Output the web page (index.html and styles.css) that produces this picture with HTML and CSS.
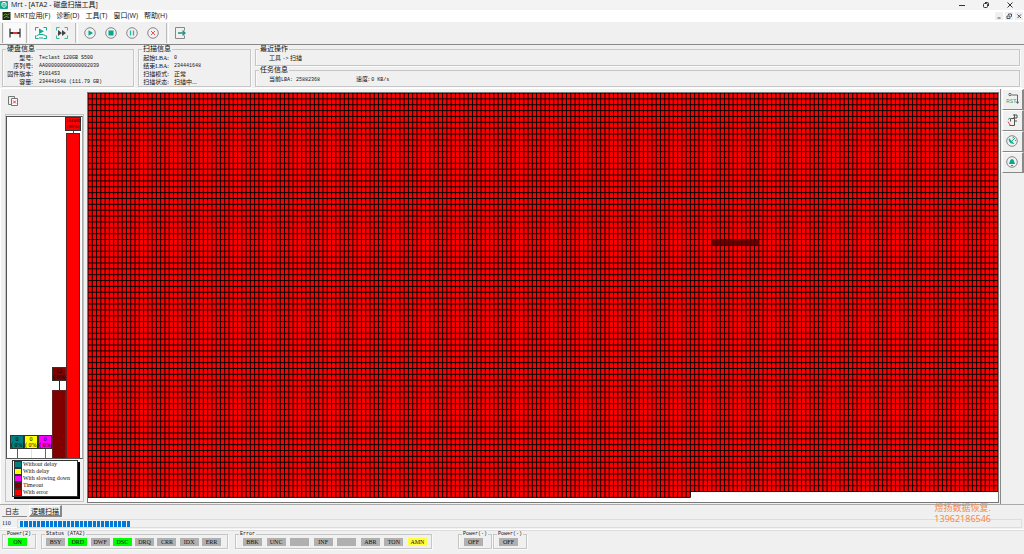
FILE: index.html
```html
<!DOCTYPE html>
<html lang="zh-CN">
<head>
<meta charset="utf-8">
<title>Mrt - [ATA2 - 磁盘扫描工具]</title>
<link rel="stylesheet" href="styles.css">
</head>
<body>
<header class="titlebar">
  <svg class="logo" viewBox="0 0 8 8"><rect width="8" height="8" rx="1" fill="#16a88c"/><path d="M2 2.2 4 1.2 6 2.2V4.6L4 6.6 2 4.6z" fill="none" stroke="#fff"/><path d="M4 2.5v2" stroke="#fff"/></svg>
  <h1 class="title">Mrt - [ATA2 - 磁盘扫描工具]</h1>
  <div class="window-buttons">
    <button aria-label="最小化"><svg viewBox="0 0 8 8"><path d="M1 4.5h6"/></svg></button>
    <button aria-label="还原"><svg viewBox="0 0 8 8"><rect x="1.5" y="2.5" width="4" height="4" rx="1"/><path d="M3 1.5h2.5a1 1 0 0 1 1 1V5"/></svg></button>
    <button aria-label="关闭"><svg viewBox="0 0 8 8"><path d="m1.5 1.5 5 5m0-5-5 5"/></svg></button>
  </div>
</header>
<nav class="menubar">
  <svg class="doc-icon" viewBox="0 0 8 8"><rect width="8" height="8" fill="#1c2a18"/><path d="M1 3.5 3 2l2 1 2-1.500M1.500 6l2-1.500 3 1" stroke="#7c9a3c" fill="none"/></svg>
  <button>MRT应用(F)</button><button>诊断(D)</button><button>工具(T)</button><button>窗口(W)</button><button>帮助(H)</button>
  <div class="child-buttons">
    <button aria-label="最小化子窗口"><svg viewBox="0 0 8 8"><path d="M2.500 6h3"/></svg></button>
    <button aria-label="还原子窗口"><svg viewBox="0 0 8 8"><path d="M2 4h3v2.500H2zM3.500 3V2h3v2.500H6"/></svg></button>
    <button aria-label="关闭子窗口"><svg viewBox="0 0 8 8"><path d="m2.500 2.500 3.500 3.500m0-3.500L2.500 6"/></svg></button>
  </div>
</nav>
<div class="toolbar">
  <div class="tool-group first">
    <button class="tool pressed" aria-label="硬盘"><svg viewBox="0 0 14 14"><path d="M2 2.500v9M12 2.500v9" stroke="#555" stroke-width="1.500"/><path d="M2 7h10" stroke="#333" stroke-width="2"/><path d="M5 7h4.500" stroke="#f03030" stroke-width="2"/></svg></button>
  </div>
  <div class="tool-group">
    <button class="tool lit" aria-label="扫描"><svg viewBox="0 0 14 14" fill="none" stroke="#16ab8d"><path d="M1.500 4.500v-3h3M9.500 1.500h3v3M1.500 9.500v3h3M12.500 9.500v3h-3"/><path d="m5 2.500 5 2.700-5 2.800z" fill="#16ab8d" stroke="none"/><path d="M2.500 10 5 8.500h4l3 1.500M5 12h4"/></svg></button>
    <button class="tool" aria-label="快进"><svg viewBox="0 0 14 14" fill="none" stroke="#36b99f"><path d="M1.500 4.500v-3h3M9.500 1.500h3v3M1.500 9.500v3h3M12.500 9.500v3h-3"/><path d="m3 4 4 3-4 3zM7 4l4 3-4 3z" fill="#444" stroke="none"/></svg></button>
  </div>
  <div class="tool-group">
    <button class="tool" aria-label="开始"><svg viewBox="0 0 14 14"><circle cx="7" cy="7" r="5.300" fill="none" stroke="#888"/><path d="m5.500 4.300 4.500 2.700-4.500 2.700z" fill="#00ab8d"/></svg></button>
    <button class="tool" aria-label="停止"><svg viewBox="0 0 14 14"><circle cx="7" cy="7" r="5.300" fill="none" stroke="#888"/><path d="M4.500 4.500h5v5h-5z" fill="#00ab8d"/></svg></button>
    <button class="tool" aria-label="暂停"><svg viewBox="0 0 14 14"><circle cx="7" cy="7" r="5.300" fill="none" stroke="#888"/><path d="M5.500 4.500v5M8.500 4.500v5" stroke="#2fb79f" stroke-width="1.300"/></svg></button>
    <button class="tool" aria-label="取消"><svg viewBox="0 0 14 14"><circle cx="7" cy="7" r="5.300" fill="none" stroke="#888"/><path d="m5 5 4 4m0-4L5 9" stroke="#f0505a"/></svg></button>
  </div>
  <div class="tool-group">
    <button class="tool" aria-label="退出"><svg viewBox="0 0 14 14" fill="none"><path d="M11.500 4.500v-3h-9v11h9v-3" stroke="#888"/><path d="M5 7h7M9.500 4.500 12 7 9.500 9.500" stroke="#228f80" stroke-width="1.300"/></svg></button>
  </div>
</div>
<section class="info">
  <fieldset class="box disk"><legend>硬盘信息</legend>
    <dl><dt>型号:</dt><dd>Teclast 120GB S500</dd><dt>序列号:</dt><dd>AA000000000000002039</dd><dt>固件版本:</dt><dd>P1014S3</dd><dt>容量:</dt><dd>234441648 (111.79 GB)</dd></dl>
  </fieldset>
  <fieldset class="box scan"><legend>扫描信息</legend>
    <dl><dt>起始LBA:</dt><dd>0</dd><dt>结束LBA:</dt><dd>234441648</dd><dt>扫描模式:</dt><dd class="cjk">正常</dd><dt>扫描状态:</dt><dd class="cjk">扫描中...</dd></dl>
  </fieldset>
  <div class="tasks">
    <fieldset class="box"><legend>最近操作</legend><p><span>工具 <b>-&gt;</b> 扫描</span></p></fieldset>
    <fieldset class="box"><legend>任务信息</legend><p><span>当前<b>LBA: 25882368</b></span><span>速度: <b>0 KB/s</b></span></p></fieldset>
  </div>
</section>
<main class="workspace">
  <aside class="side">
    <button class="clear" aria-label="清除"><svg viewBox="0 0 12 12" fill="none" stroke="#777"><path d="M4 9.500H1.500v-8h6V3"/><path d="M4.500 3.500h6v7h-6z" fill="#fff"/><path d="m6 5.500 3 3m0-3-3 3" stroke="#e03040"/></svg></button>
    <div class="chart-panel">
      <div class="chart">
        <div class="col teal"><span class="tag">0<br>( 0%)</span><i class="stem"></i></div>
        <div class="col yellow"><span class="tag">0<br>( 0%)</span><i class="stem"></i></div>
        <div class="col magenta"><span class="tag">0<br>( 0%)</span><i class="stem"></i></div>
        <div class="col maroon"><span class="tag">12<br>( 0%)</span><i class="stem"></i><i class="bar" style="height:20%"></i></div>
        <div class="col red"><span class="tag">101092<br>(99%)</span><i class="stem"></i><i class="bar" style="height:100%"></i></div>
      </div>
      <ul class="key"><li class="teal">Without delay</li><li class="yellow">With delay</li><li class="magenta">With slowing down</li><li class="maroon">Timeout</li><li class="red">With error</li></ul>
    </div>
  </aside>
  <div class="map-frame"><svg class="map" id="map" viewBox="0 0 910 409" preserveAspectRatio="none"></svg></div>
  <div class="rail">
    <button aria-label="复位"><svg viewBox="0 0 14 14" fill="none" stroke="#666"><circle cx="5" cy="2.500" r="1.200"/><path d="M6.500 3h6v8M11 9.500l1.500 2 1.500-2"/></svg><span>RST</span></button>
    <button aria-label="电源"><svg viewBox="0 0 14 14" fill="none" stroke="#555"><path d="M4.500 12.500h5v-7h-4v3M9.500 5.500v-4M8 2h4v3H8M10 8h2"/><path d="M3 6.500 5 5" stroke="#16ab8d"/><path d="m3 8.500 2 3.500" stroke="#e05050"/></svg></button>
    <button aria-label="连接"><svg viewBox="0 0 14 14" fill="none"><circle cx="7" cy="7" r="5.300" stroke="#888"/><path d="M4 4c-1 3 1 6 5.500 6z" fill="#16ab8d"/><path d="m7 7 3-3M7.500 4 9 3M10 7l1-1" stroke="#16ab8d"/></svg></button>
    <button aria-label="提醒"><svg viewBox="0 0 14 14"><circle cx="7" cy="7" r="5.300" fill="none" stroke="#888"/><path d="M3.800 9c1-1 1-5 3.200-5s2.200 4 3.200 5z" fill="#00ab8d"/><path d="M6 10.500h2" stroke="#00ab8d"/></svg></button>
  </div>
</main>
<div class="tabs" role="tablist"><button role="tab">日志</button><button role="tab" class="active" aria-selected="true">逻辑扫描</button></div>
<div class="progress"><span class="count">110</span><div class="track"><div class="fill" id="fill"></div></div></div>
<footer class="status">
  <fieldset class="box power"><legend>Power(2)</legend><div class="lamps"><span class="on">ON</span></div></fieldset>
  <fieldset class="box ata"><legend>Status (ATA2)</legend><div class="lamps"><span>BSY</span><span class="on">DRD</span><span>DWF</span><span class="on">DSC</span><span>DRQ</span><span>CRR</span><span>IDX</span><span>ERR</span></div></fieldset>
  <fieldset class="box error"><legend>Error</legend><div class="lamps"><span>BBK</span><span>UNC</span><span></span><span>INF</span><span></span><span>ABR</span><span>TON</span><span class="warn">AMN</span></div></fieldset>
  <fieldset class="box power"><legend>Power(-)</legend><div class="lamps"><span>OFF</span></div></fieldset>
  <fieldset class="box power"><legend>Power(-)</legend><div class="lamps"><span>OFF</span></div></fieldset>
</footer>
<div class="contact"><span>煜扬数据恢复.</span><span>13962186546</span></div>
<script src="app.js"></script>
</body>
</html>
```
FILE: styles.css
```css
* { box-sizing: border-box; }
body {
  margin: 0;
  height: 100vh;
  display: flex;
  flex-direction: column;
  position: relative;
  overflow: hidden;
  background: #f0f0f0;
  color: #111;
  font: 6px/8px "Liberation Serif", "Noto Sans CJK SC", serif;
}
button { border: 0; padding: 0; background: none; color: inherit; font: inherit; display: flex; align-items: center; justify-content: center; }
svg { display: block; }
.titlebar, .menubar { flex: none; display: flex; align-items: center; font: 7px/10px "Open Sans", "Noto Sans CJK SC", sans-serif; }
.titlebar { height: 10px; background: #f3f3f3; }
.logo { width: 8px; height: 8px; }
.title { margin: 0 auto 0 3px; font: inherit; }
.window-buttons, .child-buttons { display: flex; fill: none; stroke: #333; }
.window-buttons { gap: 16px; padding-right: 10px; }
.window-buttons svg, .child-buttons svg { width: 8px; height: 8px; }
.menubar { height: 12px; background: #fff; gap: 6px; padding-left: 2px; }
.doc-icon { width: 9px; height: 8px; margin-right: -3px; }
.child-buttons { margin-left: auto; gap: 2px; padding-right: 1px; stroke: #456; }
.child-buttons button { background: #f0f0f0; }

.toolbar { height: 23px; flex: none; display: flex; padding: 1px 2px; border-bottom: 1px solid #888; }
.tool-group { display: flex; align-items: center; padding: 0 3px 0 1px; border-right: 1px solid #bbb; border-left: 1px solid #fff; }
.tool-group.first { padding: 0 1px; border-left-color: #aaa; }
.tool-group + .tool-group { margin-left: 1px; }
.tool-group:last-child { border-right: 0; padding-left: 0; }
.tool { width: 21px; height: 20px; }
.tool svg { width: 14px; height: 14px; }
.pressed { background: #fafafa; }
.lit { background: #f7f7f7; }

.box { margin: 0; padding: 0; min-width: 0; border: 1px solid #c6c6c6; box-shadow: inset 1px 0 #fafafa, 1px 1px #fafafa; }
.box legend { margin-left: 3px; padding: 0 1px; line-height: 7px; }
.info { flex: none; display: flex; gap: 4px; padding: 1px 4px 0 2px; height: 43px; }
.disk { width: 132px; height: 41px; }
.scan { width: 113px; height: 41px; }
.info .box legend { font-size: 7px; }
dl { margin: 0; padding-top: 1px; display: grid; grid-template-columns: 30px 1fr; column-gap: 6px; }
dt { text-align: right; white-space: nowrap; }
.scan dl { column-gap: 5px; }
dd { margin: 0; font-family: "Liberation Mono", monospace; font-size: 5px; white-space: nowrap; }
dd.cjk { font-family: "Noto Sans CJK SC", sans-serif; font-size: 6px; }
b { font-weight: normal; font-family: "Liberation Mono", monospace; font-size: 5px; }
.tasks { flex: 1; display: flex; flex-direction: column; gap: 1px; }
.tasks .box { height: 20px; }
.tasks p { display: flex; margin: 0; padding: 1px 0 0 13px; gap: 36px; }

.workspace { flex: 1; min-height: 0; display: flex; border-top: 1px solid #fff; }
.side { width: 87px; flex: none; display: flex; flex-direction: column; padding: 0 3px 2px 4px; border-left: 1px solid #fff; }
.clear { width: 12px; height: 25px; margin-left: 2px; padding-bottom: 1px; }
.clear svg { width: 12px; height: 12px; }
.chart-panel { flex: 1; min-height: 0; display: flex; flex-direction: column; border: 1px solid #c4c4c4; padding: 1px 0 4px; }
.chart { flex: 1; min-height: 0; display: flex; align-items: flex-end; padding-left: 3px; background: #fff; border: 1px solid #555; border-right-color: #aaa; }
.col { width: 14px; flex: none; height: 100%; display: flex; flex-direction: column; justify-content: flex-end; align-items: center; }
.teal { --tone: #008080; }
.yellow { --tone: #ffff00; }
.magenta { --tone: #ff00ff; }
.maroon { --tone: #800000; }
.red { --tone: #ff0000; }
.tag { width: 100%; height: 14px; flex: none; text-align: center; color: #000; font: 6px/6px "Liberation Serif", serif; white-space: nowrap; background: var(--tone); border: 1px solid #333; }
.red .tag { width: 16px; font-size: 5px; }
.stem { width: 1px; height: 9px; flex: none; background: var(--tone); }
.red .stem { height: 2px; }
.bar { width: 100%; min-height: 0; background: var(--tone); border: 1px solid #622; border-bottom: 0; }
.key { list-style: none; margin: 1px 5px 0 6px; padding: 0 1px; background: #fff; border: 1px solid #333; box-shadow: 2px 2px #000; }
.key li { display: flex; align-items: center; gap: 1px; line-height: 7px; white-space: nowrap; }
.key li::before { content: ""; width: 6px; height: 5px; background: var(--tone); border: 1px solid #333; }
.map-frame { flex: 1; min-width: 0; margin: 3px 1px 1px 0; border: 1px solid #777; background: #fff; }
.map { width: 100%; height: 100%; }
.rail { width: 24px; flex: none; display: flex; flex-direction: column; border-left: 1px solid #888; padding-left: 1px; }
.rail button { height: 21px; padding: 0 1px 1px 0; flex-direction: column; position: relative; border: 1px solid #fff; border-right: 2px solid #888; border-bottom: 1px solid #888; }
.rail svg { width: 14px; height: 14px; }
.rail span { position: absolute; left: 3px; bottom: 5px; font: 6px/6px "Noto Sans", sans-serif; color: #16ab8d; }

.tabs { flex: none; display: flex; gap: 2px; padding-left: 2px; height: 14px; border-top: 1px solid #aaa; }
.tabs button { height: 12px; padding: 0 3px; font: 7px/10px "Noto Sans CJK SC", sans-serif; }
.tabs button:first-child { padding-right: 8px; border-bottom: 1px solid #888; }
.tabs .active { border: 1px solid #fff; border-right: 2px solid #888; border-bottom: 2px solid #888; padding: 0 1px; }
.progress { flex: none; display: flex; height: 12px; padding: 1px 2px; border-bottom: 1px solid #fff; }
.count { width: 15px; line-height: 9px; border-bottom: 1px solid #fff; }
.track { flex: 1; padding: 1px 2px; border: 1px solid #ddd; }
.fill { display: flex; gap: 1px; width: 11%; height: 6px; }
.fill i { flex: 1; background: #0078d7; }
.status { flex: none; display: flex; height: 24px; border-top: 1px solid #ddd; padding: 0 2px 5px; }
.status .box { height: 18px; }
.status legend { font-family: "Liberation Mono", monospace; font-size: 5px; }
.status .power { width: 34px; margin-right: 1px; }
.status .ata { width: 187px; margin: 0 7px 0 4px; }
.status .error { width: 197px; margin-right: 26px; }
.lamps { display: flex; justify-content: space-between; padding: 0 6px 0 4px; }
.power .lamps { padding-left: 5px; }
.error .lamps { padding: 0 4px 0 7px; }
.lamps span { width: 19px; height: 8px; background: #b0b0b0; text-align: center; }
.lamps .on { background: #00ff00; }
.lamps .warn { background: #ffff40; }
.contact { position: absolute; right: 33px; bottom: 30px; display: flex; flex-direction: column; align-items: center; color: #f58a4b; font: 9px/11px "Noto Sans", "Noto Sans CJK SC", sans-serif; }
```
FILE: app.js
```js
const COLS = 213, ROWS = 69, LAST_ROW_COLS = 141;
const W = 910 / COLS, H = 404.4 / ROWS;
const lastTop = (ROWS - 1) * H, bottom = ROWS * H, lastRight = LAST_ROW_COLS * W;
let lines = "";
for (let c = 0; c <= COLS; c++) {
  lines += `M${c * W} 0V${c <= LAST_ROW_COLS ? bottom : lastTop}`;
}
for (let r = 0; r <= ROWS; r++) {
  lines += `M0 ${r * H}H${r < ROWS ? 910 : lastRight}`;
}
const cells = `M0 0H910V${lastTop}H${lastRight}V${bottom}H0z`;
document.getElementById("map").innerHTML =
  `<path d="${cells}" fill="#f00"/>` +
  `<path d="${lines}" stroke="#000" stroke-width="0.950" fill="none"/>` +
  `<rect x="${146 * W}" y="${25 * H}" width="${11 * W}" height="${H}" fill="#500000" fill-opacity="0.850"/>`;
document.getElementById("fill").innerHTML = "<i></i>".repeat(26);
```
